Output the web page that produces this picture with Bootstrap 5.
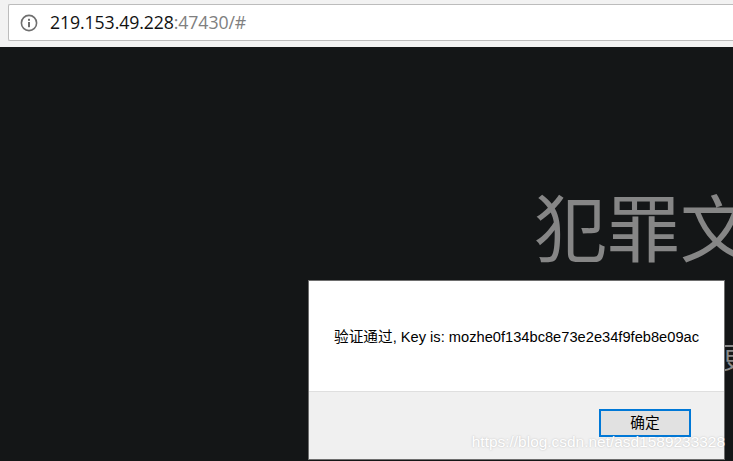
<!DOCTYPE html>
<html lang="zh">
<head>
<meta charset="utf-8">
<title>验证通过</title>
<link href="https://cdn.jsdelivr.net/npm/bootstrap@5.3.0/dist/css/bootstrap.min.css" rel="stylesheet">
<style>
html,body{height:100%;margin:0;overflow:hidden;background:#141617;}
body{font-family:"Liberation Sans","Noto Sans CJK SC",sans-serif;}
.chrome-bar{height:47px;background:#f2f2f2;padding:4px 0 6px 8px;}
.addr-box{height:37px;background:#fff;border:1px solid #bcbcbc;border-right:0;border-radius:2px 0 0 2px;padding-left:11px;gap:12px;}
.addr-text{font-family:"Open Sans","Noto Sans",sans-serif;font-size:17.7px;color:#111;letter-spacing:-.1px;}
.addr-text span{color:#808080;}
.stage{height:414px;background:#141617;overflow:hidden;}
.hero-title{font-family:"Noto Sans CJK SC",sans-serif;font-weight:400;font-size:73px;line-height:80px;color:#868686;white-space:nowrap;margin:0;padding:137px 0 0 534px;}
.hero-sub{font-family:"Noto Sans CJK SC",sans-serif;font-size:29px;line-height:34px;color:#8a8a8a;white-space:nowrap;padding:75px 0 0 722px;}
.alert-box{left:308px;top:233px;width:417px;height:180px;background:#fff;border:1px solid #6e6e6e;}
.alert-body{height:110px;font-size:14.67px;color:#000;padding:37px 0 0 25px;white-space:nowrap;line-height:38px;}
.alert-foot{height:68px;background:#f0f0f0;border-top:1px solid #dfdfdf;padding:17px 33px 0 0;}
.ok-btn{width:92px;height:28px;background:#e1e1e1;border:2px solid #0078d7;border-radius:0;font-size:14.67px;line-height:22px;padding:0;color:#000;}
.wmark{right:8px;bottom:9px;font-size:15.45px;line-height:20px;color:#fff;white-space:nowrap;text-shadow:0 0 2px rgba(110,110,110,.4);pointer-events:none;}
</style>
</head>
<body>
<div class="chrome-bar">
  <div class="addr-box d-flex align-items-center">
    <svg width="18" height="18" viewBox="0 0 18 18" aria-hidden="true"><circle cx="9" cy="9" r="7.6" fill="none" stroke="#6f6f6f" stroke-width="1.6"/><rect x="8" y="8" width="2" height="5.2" fill="#6f6f6f"/><rect x="8" y="4.8" width="2" height="2" fill="#6f6f6f"/></svg>
    <div class="addr-text">219.153.49.228<span>:47430/#</span></div>
  </div>
</div>
<div class="stage position-relative">
  <h1 class="hero-title">犯罪文</h1>
  <div class="hero-sub">更</div>
  <div class="alert-box position-absolute">
    <div class="alert-body">验证通过, Key is: mozhe0f134bc8e73e2e34f9feb8e09ac</div>
    <div class="alert-foot d-flex justify-content-end align-items-start">
      <button type="button" class="btn ok-btn">确定</button>
    </div>
  </div>
  <div class="wmark position-absolute">https://blog.csdn.net/asd1589233328</div>
</div>
<script src="https://cdn.jsdelivr.net/npm/bootstrap@5.3.0/dist/js/bootstrap.bundle.min.js"></script>
</body>
</html>
